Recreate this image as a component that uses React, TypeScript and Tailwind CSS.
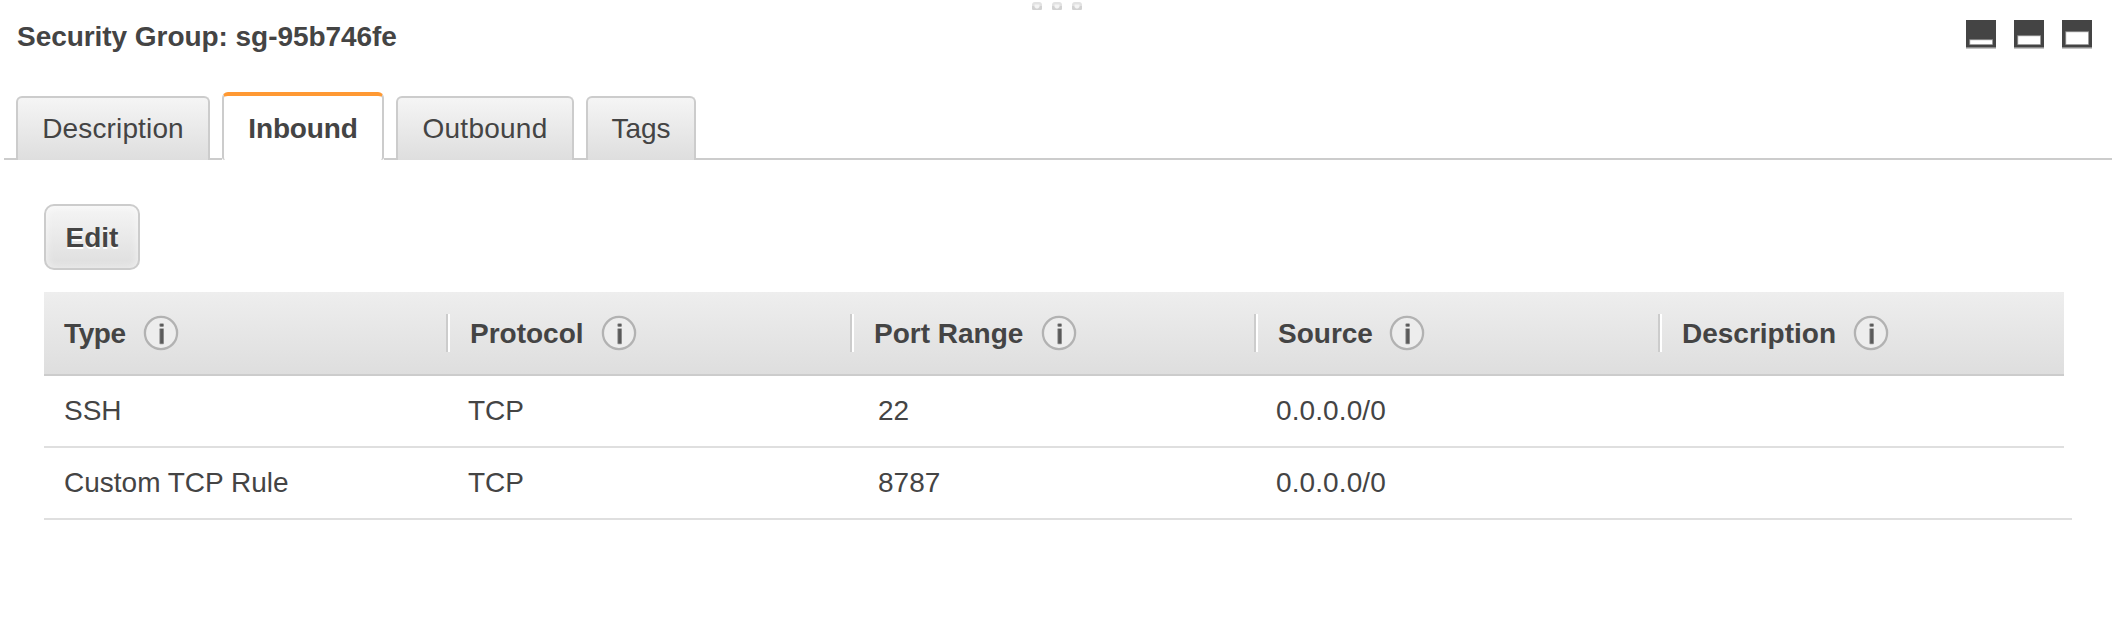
import type { ReactNode } from "react";

function GripDot() {
  return (
    <svg width="10" height="9" viewBox="0 0 10 9">
      <rect x="0" y="0" width="10" height="8" rx="3" fill="#e2e2e2" />
      <path d="M0 4h10v2.500q0 1.500-1 1.500H1Q0 8 0 6.500z" fill="#d2d2d2" />
      <path d="M2.500 2.500h5v2.500L6 6.500H4L2.500 5z" fill="#f4f4f4" />
    </svg>
  );
}

function PaneIcon({ top }: { top: number }) {
  return (
    <svg width="30" height="29" viewBox="0 0 30 29">
      <rect width="30" height="27" fill="#444" />
      <rect y="27" width="30" height="1" fill="#8c8c8c" />
      <rect y="28" width="30" height="1" fill="#c4c4c4" />
      <rect x="3.300" y={top - 0.700} width="23.600" height={25.500 - top} fill="#999" />
      <rect x="4.200" y={top + 0.200} width="21.900" height={24 - top} fill="#fff" />
    </svg>
  );
}

function InfoIcon() {
  return (
    <svg width="36" height="36" viewBox="0 0 36 36" className="shrink-0">
      <circle cx="18" cy="18" r="16.100" fill="#ededed" stroke="#b2b2b2" strokeWidth="2.300" />
      <rect x="16.300" y="8.500" width="4.700" height="3.200" rx="1" fill="#999" />
      <rect x="17.200" y="8.800" width="3" height="2.600" fill="#5a5a5a" />
      <rect x="16.300" y="13.300" width="4.700" height="16" rx="1" fill="#999" />
      <rect x="17.200" y="14" width="3" height="14.500" fill="#5a5a5a" />
    </svg>
  );
}

function Tab({ className, children }: { className: string; children: ReactNode }) {
  return (
    <button
      className={`${className} box-border h-16 rounded-t-[6px] border-2 border-b-0 border-[#ccc] bg-linear-to-b from-[#f5f5f5] to-[#dedede] text-center`}
    >
      {children}
    </button>
  );
}

const columns = [
  { name: "Type", label: "w-[79px] tracking-[-0.4px]" },
  { name: "Protocol", label: "w-[131px]" },
  { name: "Port Range", label: "w-[167px]" },
  { name: "Source", label: "w-[111px]" },
  { name: "Description", label: "w-[171px]" },
];

const rules = [
  { type: "SSH", protocol: "TCP", port: "22", source: "0.0.0.0/0", width: "w-[2020px]" },
  { type: "Custom TCP Rule", protocol: "TCP", port: "8787", source: "0.0.0.0/0", width: "w-[2028px]" },
];

export default function App() {
  return (
    <div className="h-[624px] w-[2118px] overflow-hidden bg-white font-['Liberation_Sans',Arial,sans-serif] text-[28px] leading-8 text-[#444]">
      <div className="flex h-[10px] items-start justify-center gap-[10px] pt-[2px] pr-[4px]">
        <GripDot />
        <GripDot />
        <GripDot />
      </div>
      <header className="flex h-[82px] items-start justify-between pt-[10px] pr-[26px] pl-[17px]">
        <h1 className="pt-px font-bold tracking-[-0.05px] whitespace-nowrap">Security Group: sg-95b746fe</h1>
        <div className="flex gap-[18px]">
          <PaneIcon top={20} />
          <PaneIcon top={16} />
          <PaneIcon top={12} />
        </div>
      </header>

      <nav className="flex h-[68px] items-end pr-[6px] pl-1">
        <div className="w-3 border-b-2 border-[#ccc]" />
        <Tab className="w-[194px] tracking-[0.15px]">Description</Tab>
        <div className="w-3 border-b-2 border-[#ccc]" />
        <button className="h-[68px] w-[162px] rounded-t-[6px] rounded-b-[3px] border-x-2 border-t-4 border-x-[#ccc] border-t-[#f93] bg-white pt-[2px] text-center font-bold tracking-[-0.15px]">
          Inbound
        </button>
        <div className="w-3 border-b-2 border-[#ccc]" />
        <Tab className="w-[178px] tracking-[0.25px]">Outbound</Tab>
        <div className="w-3 border-b-2 border-[#ccc]" />
        <Tab className="w-[110px]">Tags</Tab>
        <div className="grow border-b-2 border-[#ccc]" />
      </nav>

      <main className="pt-[44px] pl-[44px]">
        <button className="block h-[66px] w-24 rounded-[10px] border-2 border-[#ccc] bg-linear-to-b from-[#f5f5f5] to-[#dedede] pt-[2px] text-center font-bold shadow-[inset_0_0_8px_#ffffffa0] [text-shadow:0_2px_0_#fff]">
          Edit
        </button>

        <div className="mt-[22px] flex h-[84px] w-[2020px] items-center border-b-2 border-[#ccc] bg-linear-to-b from-[#eee] to-[#dedede] font-bold">
          {columns.map((c, i) => (
            <div key={c.name} className={i === 0 ? "flex w-[402px] items-center pl-5" : "flex w-[404px] items-center"}>
              {i > 0 && <div className="mr-5 h-[38px] w-1 border-l-2 border-[#ccc] bg-white" />}
              <span className={`${c.label} pt-[2px] whitespace-nowrap`}>{c.name}</span>
              <InfoIcon />
            </div>
          ))}
        </div>

        {rules.map((r) => (
          <div key={r.type} className={`${r.width} flex h-[72px] items-center border-b-2 border-[#dfdfdf] pb-px`}>
            <span className="w-[404px] pl-5">{r.type}</span>
            <span className="w-[404px] pl-5">{r.protocol}</span>
            <span className="w-[404px] pl-[26px]">{r.port}</span>
            <span className="w-[404px] pl-5 tracking-[0.1px]">{r.source}</span>
          </div>
        ))}
      </main>
    </div>
  );
}
